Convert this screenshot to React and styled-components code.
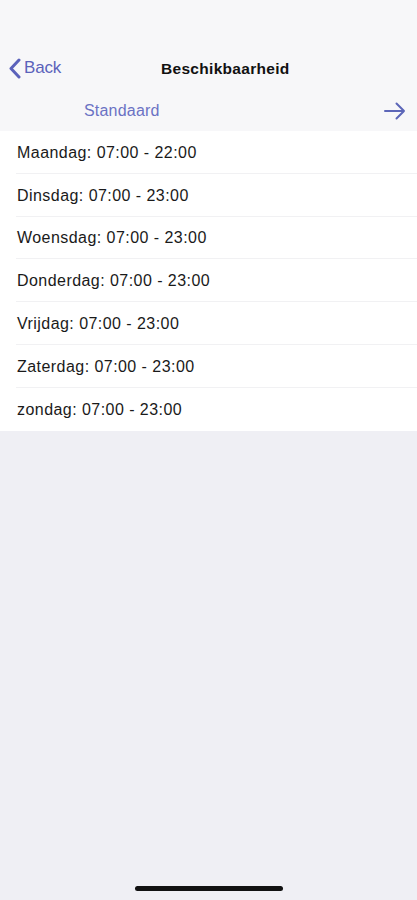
import React from 'react';
import styled, { createGlobalStyle } from 'styled-components';

const GlobalStyle = createGlobalStyle`
  html, body {
    margin: 0;
    padding: 0;
    background: #efeff4;
    font-family: 'Liberation Sans', Arial, sans-serif;
  }
`;

const Screen = styled.div`
  width: 417px;
  height: 900px;
  display: flex;
  flex-direction: column;
  background: #efeff4;
  position: relative;
  overflow: hidden;
`;

const Header = styled.div`
  background: #f7f7f9;
  padding-top: 46px;
`;

const NavBar = styled.div`
  height: 44px;
  display: flex;
  align-items: center;
  position: relative;
`;

const BackButton = styled.div`
  display: flex;
  align-items: center;
  gap: 3px;
  padding-left: 8px;
  color: #5b62bb;
  font-size: 17px;
  letter-spacing: -0.2px;
`;

const Title = styled.div`
  position: absolute;
  left: 161px;
  top: 1px;
  height: 44px;
  display: flex;
  align-items: center;
  font-size: 15.5px;
  font-weight: 700;
  letter-spacing: 0.3px;
  color: #111;
`;

const SubBar = styled.div`
  height: 41px;
  display: flex;
  align-items: center;
  justify-content: space-between;
  padding: 0 11px 0 84px;
  color: #6b72c4;
  font-size: 16px;
  letter-spacing: 0.2px;
`;

const List = styled.div`
  background: #fff;
`;

const Row = styled.div`
  height: 42.8px;
  display: flex;
  align-items: center;
  margin-left: 16px;
  padding: 2px 0 0 1px;
  font-size: 16px;
  letter-spacing: 0.45px;
  color: #1a1a1a;
  border-bottom: ${p => (p.last ? 'none' : '1px solid #f1f1f3')};
  box-sizing: border-box;
`;

const HomeIndicator = styled.div`
  position: absolute;
  bottom: 9px;
  left: 135px;
  width: 148px;
  height: 5px;
  border-radius: 3px;
  background: #111;
`;

const days = [
  'Maandag: 07:00 - 22:00',
  'Dinsdag: 07:00 - 23:00',
  'Woensdag: 07:00 - 23:00',
  'Donderdag: 07:00 - 23:00',
  'Vrijdag: 07:00 - 23:00',
  'Zaterdag: 07:00 - 23:00',
  'zondag: 07:00 - 23:00',
];

export default function App() {
  return (
    <>
      <GlobalStyle />
      <Screen>
        <Header>
          <NavBar>
            <BackButton>
              <svg width="13" height="21" viewBox="0 0 13 21">
                <path d="M11 2 L3 10.5 L11 19" fill="none" stroke="#5b62bb" strokeWidth="3" strokeLinecap="round" strokeLinejoin="round" />
              </svg>
              Back
            </BackButton>
            <Title>Beschikbaarheid</Title>
          </NavBar>
          <SubBar>
            Standaard
            <svg width="22" height="18" viewBox="0 0 22 18">
              <path d="M1 9 H20 M12.5 1.5 L20 9 L12.5 16.5" fill="none" stroke="#5c66b8" strokeWidth="2" strokeLinecap="round" strokeLinejoin="round" />
            </svg>
          </SubBar>
        </Header>
        <List>
          {days.map((d, i) => (
            <Row key={d} last={i === days.length - 1}>{d}</Row>
          ))}
        </List>
        <HomeIndicator />
      </Screen>
    </>
  );
}
